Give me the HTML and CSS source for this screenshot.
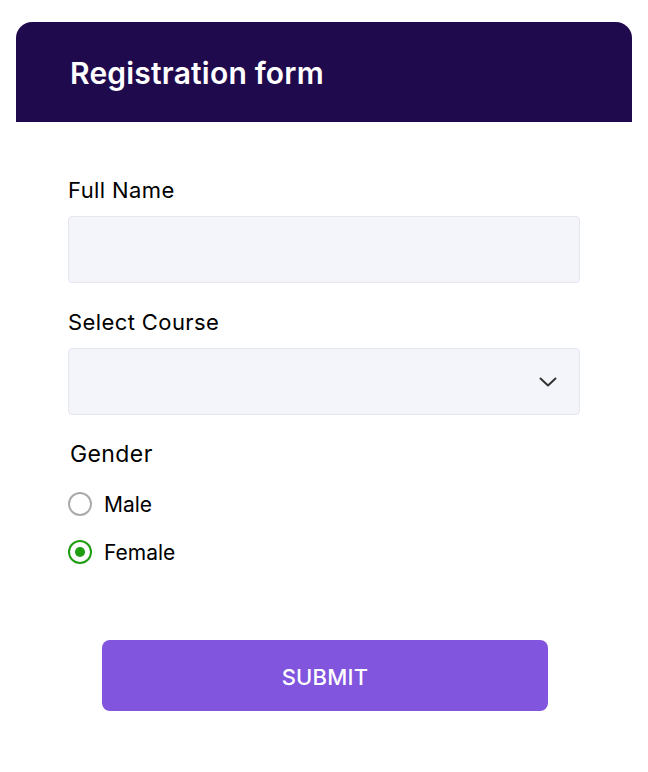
FILE: index.html
```
<!DOCTYPE html>
<html lang="en">
<head>
<meta charset="utf-8">
<title>Registration form</title>
<link rel="stylesheet" href="styles.css">
</head>
<body>
<div class="card">
  <header class="card-header">
    <h1 class="title">Registration form</h1>
  </header>
  <form class="form">
    <label class="label" for="name">Full Name</label>
    <input class="field" id="name" type="text">
    <label class="label label-gap" for="course">Select Course</label>
    <div class="select-wrap">
      <select class="field select" id="course"><option></option></select>
      <svg class="chevron" width="18" height="10" viewBox="0 0 18 10"><polyline points="1.5,1.5 9,8.5 16.5,1.5" fill="none" stroke="#333" stroke-width="2" stroke-linecap="round" stroke-linejoin="round"/></svg>
    </div>
    <div class="label label-gap gender">Gender</div>
    <div class="radios">
      <label class="radio-row"><input class="radio" type="radio" name="g"><span>Male</span></label>
      <label class="radio-row"><input class="radio" type="radio" name="g" checked><span>Female</span></label>
    </div>
    <div class="actions">
      <button class="submit" type="button">SUBMIT</button>
    </div>
  </form>
</div>
</body>
</html>
```
FILE: styles.css
```
* { box-sizing: border-box; }
html, body { margin: 0; padding: 0; background: #fff; }
body {
  font-family: Inter, "Noto Sans", "Liberation Sans", sans-serif;
  color: #000;
  padding: 22px 16px 0;
}
.card {
  width: 616px;
  background: #fff;
  border-radius: 16px 16px 0 0;
  padding-bottom: 40px;
}
.card-header {
  height: 100px;
  background: #200a4e;
  border-radius: 16px 16px 0 0;
  display: flex;
  align-items: center;
  padding-left: 54px;
}
.title {
  margin: 0;
  color: #fff;
  font-size: 30px;
  font-weight: 600;
  letter-spacing: 0.2px;
  line-height: 36px;
  padding-top: 2px;
}
.form {
  display: flex;
  flex-direction: column;
  padding: 56px 52px 0;
}
.label {
  display: block;
  font-size: 22px;
  line-height: 24px;
  font-weight: 400;
  color: #000;
  margin-bottom: 14px;
  letter-spacing: 0.4px;
}
.label-gap { margin-top: 27px; }
.field {
  display: block;
  width: 512px;
  height: 67px;
  background: #f4f5fa;
  border: 1px solid #e5e5f0;
  border-radius: 4px;
  font: inherit;
  margin: 0;
  outline: none;
}
.select-wrap { position: relative; width: 512px; }
.select { appearance: none; -webkit-appearance: none; }
.chevron {
  position: absolute;
  right: 23px;
  top: 29px;
  pointer-events: none;
}
.gender { padding-left: 2px; margin-bottom: 26px; font-size: 23px; }
.radios { display: flex; flex-direction: column; gap: 24px; }
.radio-row {
  display: flex;
  align-items: center;
  gap: 12px;
  height: 24px;
  font-size: 21px;
  color: #000;
}
.radio {
  appearance: none;
  -webkit-appearance: none;
  margin: 0;
  width: 24px;
  height: 24px;
  border: 2px solid #ababab;
  border-radius: 50%;
  background: #fff;
  display: grid;
  place-items: center;
}
.radio:checked { border-color: #1f9e12; }
.radio:checked::after {
  content: "";
  width: 10px;
  height: 10px;
  border-radius: 50%;
  background: #1f9e12;
}
.actions { display: flex; justify-content: center; margin-top: 76px; padding-left: 2px; }
.submit {
  width: 446px;
  height: 71px;
  background: #8155de;
  border: none;
  border-radius: 8px;
  color: #fff;
  font-family: inherit;
  font-size: 22px;
  font-weight: 500;
  letter-spacing: 0.2px;
  padding: 3px 0 0;
}
```
